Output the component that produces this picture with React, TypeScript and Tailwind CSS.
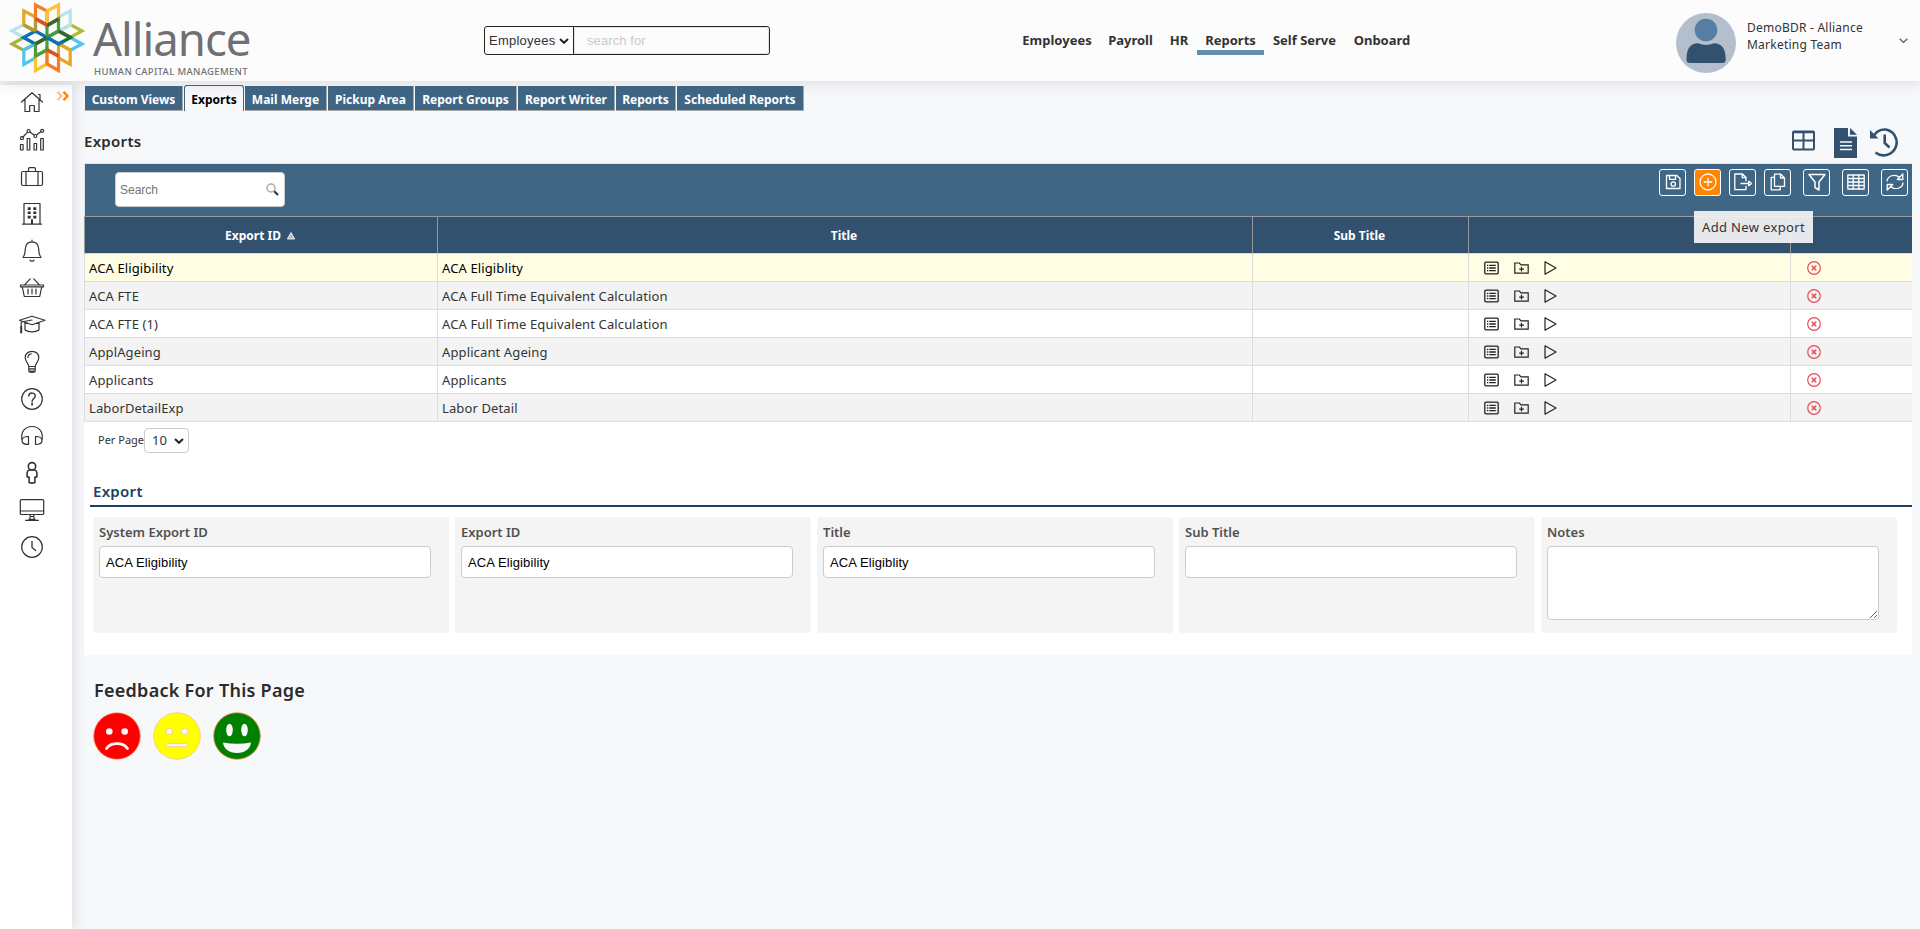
import type { ReactNode } from "react";
import clsx from "clsx";

const tabs = [
	{ name: "Custom Views", width: "w-[98px]" },
	{ name: "Exports", width: "w-[60px]" },
	{ name: "Mail Merge", width: "w-[82px]" },
	{ name: "Pickup Area", width: "w-[86px]" },
	{ name: "Report Groups", width: "w-[102px]" },
	{ name: "Report Writer", width: "w-[97px]" },
	{ name: "Reports", width: "w-[60px]" },
	{ name: "Scheduled Reports", width: "w-[127px]" },
];

const navigation = [
	{ name: "Employees", width: "w-[86px]" },
	{ name: "Payroll", width: "w-[61px]" },
	{ name: "HR", width: "w-[36px]" },
	{ name: "Reports", width: "w-[67px]" },
	{ name: "Self Serve", width: "w-[81px]" },
	{ name: "Onboard", width: "w-[74px]" },
];

const rows = [
	{ id: "ACA Eligibility", title: "ACA Eligiblity" },
	{ id: "ACA FTE", title: "ACA Full Time Equivalent Calculation" },
	{ id: "ACA FTE (1)", title: "ACA Full Time Equivalent Calculation" },
	{ id: "ApplAgeing", title: "Applicant Ageing" },
	{ id: "Applicants", title: "Applicants" },
	{ id: "LaborDetailExp", title: "Labor Detail" },
];

const fields = [
	{ label: "System Export ID", value: "ACA Eligibility" },
	{ label: "Export ID", value: "ACA Eligibility" },
	{ label: "Title", value: "ACA Eligiblity" },
	{ label: "Sub Title", value: "" },
];

const sidebarIcons: { name: string; icon: ReactNode }[] = [
	{
		name: "Home",
		icon: (
			<>
				<path d="M3.5 13 14 3.8 24.5 13M7 10.500V22.500H11.700V16.500H16.300V22.500H21V10.500" />
				<path d="M20.500 5.500H22V10" />
			</>
		),
	},
	{
		name: "Analytics",
		icon: (
			<>
				<path d="M2.500 18.500h2.600v5.500H2.500zM9.200 12.500h2.600V24H9.200zM16 17.500h2.600V24H16zM22.700 12.500h2.600V24h-2.600z" />
				<path d="m5 11 4.300-4.600M12 6l4 3M18.800 8.800l4-3" />
				<circle cx="3.900" cy="12.200" r="1.500" />
				<circle cx="10.600" cy="5" r="1.500" />
				<circle cx="17.300" cy="10" r="1.500" />
				<circle cx="24.200" cy="4.800" r="1.500" />
			</>
		),
	},
	{
		name: "Briefcase",
		icon: (
			<>
				<rect x="3.500" y="8.500" width="21" height="14" rx="1.500" />
				<path d="M8 8.500v14M20 8.500v14M10.500 8.500V6q0-1.300 1.300-1.300h4.400Q17.500 4.700 17.500 6v2.500" />
			</>
		),
	},
	{
		name: "Company",
		icon: (
			<>
				<path d="M6 24V3.500h16V24M4.500 24.200h19M14 19.500v4.500" />
				<path
					d="M9.700 7.300h3v2.600h-3zM15.300 7.300h3v2.600h-3zM9.700 11.500h3v2.600h-3zM15.300 11.500h3v2.600h-3zM9.700 15.800h3v2.600h-3zM15.300 15.800h3v2.600h-3zM13 19.500h2V24h-2z"
					fill="#333"
					stroke="none"
				/>
			</>
		),
	},
	{
		name: "Alerts",
		icon: (
			<>
				<path d="M14 3.200v1.500M5 20.500c2-2.500 2.200-5 2.400-9C7.800 7 10.300 4.800 14 4.800s6.200 2.200 6.600 6.700c.2 4 .4 6.500 2.400 9z" />
				<path d="M12 23c.5 1.600 3.500 1.600 4 0" />
			</>
		),
	},
	{
		name: "Benefits",
		icon: (
			<>
				<path d="M2.500 11h23v1.800h-23zM4.300 13l2 9.500h15.400l2-9.500M6.500 10.800l5.700-6M21.500 10.800l-5.700-6" />
				<path d="M10 15v4.800M14 15v4.800M18 15v4.800" />
			</>
		),
	},
	{
		name: "Learning",
		icon: (
			<>
				<path d="m1.500 9.200 12.500-4 13 4-13 4.500zM7 11.500V19c3.500 2.600 10.500 2.600 14 0v-7.500" />
				<path d="M14 9 3.200 11v5" />
				<path d="M3.200 16v5.500" strokeWidth="2" />
			</>
		),
	},
	{
		name: "Ideas",
		icon: (
			<>
				<path d="M10.800 18.500c-.3-3.600-3.600-4.600-3.600-9 0-3.700 3-6.200 6.800-6.200s6.800 2.500 6.800 6.200c0 4.400-3.300 5.400-3.600 9zM10.800 18.500v4q0 1.900 3.200 1.900t3.200-1.900v-4M10.800 20.800h6.400M11.800 23h4.400" />
				<path d="M10 9.500c0-2 1.200-3.300 3.200-3.600" />
			</>
		),
	},
	{
		name: "Help",
		icon: (
			<>
				<circle cx="14" cy="14" r="10.300" />
				<path d="M10.800 11c.2-4 6.600-3.800 6.500 0 0 2.400-3.200 2.700-3.200 5.500" strokeWidth="1.400" />
				<path d="M14.100 18.300v1.600" strokeWidth="1.600" />
			</>
		),
	},
	{
		name: "Support",
		icon: (
			<>
				<path d="M4 17.500C2.500 10 7 4.500 14 4.500S25.500 10 24 17.500" />
				<path d="M10.500 14.500v8c-4 0-6.500-1-6.500-4s2.500-4 6.500-4zM17.500 14.500v8c4 0 6.500-1 6.500-4s-2.500-4-6.500-4z" />
			</>
		),
	},
	{
		name: "People",
		icon: (
			<>
				<circle cx="14" cy="7.300" r="3.700" strokeWidth="1.600" />
				<path d="M11.300 11h5.400q2.200.8 2.200 3v4h-2v5.500q-2.900 1.200-5.800 0V18h-2v-4q0-2.200 2.200-3z" strokeWidth="1.600" />
			</>
		),
	},
	{
		name: "Devices",
		icon: (
			<>
				<rect x="2.300" y="3.700" width="23.400" height="14.800" rx="1" />
				<path d="M2.300 15h23.400M12.300 18.700l-.5 4.500M15.700 18.700l.5 4.500M7.500 24.300h13M12 20.500h4M11 23.400h6" />
			</>
		),
	},
	{
		name: "Time",
		icon: (
			<>
				<circle cx="14" cy="14" r="10.300" />
				<path d="M14 8.500v6l3.700 3" strokeWidth="1.300" />
			</>
		),
	},
];

const toolbar: { name: string; space: string; icon: ReactNode }[] = [
	{
		name: "Save",
		space: "mr-2",
		icon: (
			<>
				<path d="M2.500 2.500h10.300l3.200 3v10H2.500zM5.500 2.500v3.800h6V2.500" />
				<circle cx="9.300" cy="11" r="2.200" />
			</>
		),
	},
	{
		name: "Add",
		space: "mr-2",
		icon: (
			<>
				<circle cx="9" cy="9" r="8" />
				<path d="M9 4.800v8.400M4.800 9h8.400" />
			</>
		),
	},
	{
		name: "Export",
		space: "mr-2",
		icon: (
			<>
				<path d="M12 13v3.700H.8V1h7.700L12 4.500v3.700M8.300 1v3.700H12M6.500 10.500H15" />
				<path d="m14.700 8.300 3 2.200-3 2.200z" />
			</>
		),
	},
	{
		name: "Copy",
		space: "mr-3",
		icon: (
			<>
				<path d="M5.500 1.200h6.300L15.500 5v8.300H5.500zM11.500 1.200V5h4" />
				<path d="M5.300 4.300H2.200v12.500h9v-3.300" />
			</>
		),
	},
	{ name: "Filter", space: "mr-3", icon: <path d="M1 1.500h16L11 9v8l-4-2.500V9z" strokeWidth="1.500" /> },
	{
		name: "Columns",
		space: "mr-3",
		icon: <path d="M.8 2h16.400v14H.8zM.8 5.500h16.400M.8 9h16.400M.8 12.500h16.400M6.200 2.500v13M11.800 2.500v13" />,
	},
	{
		name: "Refresh",
		space: "",
		icon: <path d="M1 8.500C1.200 2.800 9 .2 13.500 4.500M16.800 1v5.500h-5.500zM17 9.500c-.2 5.700-8 8.300-12.500 4M1.200 17v-5.500h5.500z" />,
	},
];

function Logo() {
	return (
		<svg className="h-[76px] w-[78px]" viewBox="0 0 78 76" fill="none" strokeWidth="3.200" strokeLinejoin="miter">
			<path d="M4 31 15.500 24.700 27 31 15.500 37.200z" stroke="#b5e3f0" />
			<path d="M74 31 62.500 24.700 51 31 62.500 37.200z" stroke="#b0bc36" />
			<path d="M4 44 15.500 37.700 27 44 15.500 50.200z" stroke="#a3b636" />
			<path d="M74 44 62.500 37.700 51 44 62.500 50.200z" stroke="#4fc4ec" />
			<path d="M15.800 10.800 27.500 17V31.500L15.800 25z" stroke="#e3a724" />
			<path d="M62.200 10.800 50.500 17V31.500L62.200 25z" stroke="#b5e3f0" />
			<path d="M15.800 64.300 27.500 58V43.500L15.800 50z" stroke="#4fc4ec" />
			<path d="M62.200 64.300 50.500 58V43.500L62.200 50z" stroke="#e3a724" />
			<path d="M27.500 5 39 11V25.500L27.500 19z" stroke="#f47b28" />
			<path d="M50.500 5 39 11V25.500L50.500 19z" stroke="#fdc22f" />
			<path d="M27.500 70.500 39 64V49.500L27.500 56z" stroke="#fdc22f" />
			<path d="M50.500 70.500 39 64V49.500L50.500 56z" stroke="#f47b28" />
			<path d="M39 37.500 27.500 31 15.500 37.500 27.500 44z" stroke="#0873b5" />
			<path d="M39 37.500 50.500 31 62.500 37.500 50.500 44z" stroke="#17713e" />
			<path d="M39 25.500 50.500 19V31L39 37.500zM39 37.500V50L27.500 56V44z" stroke="#4c9b40" />
			<path d="M39 25.500 50.500 19M27.500 44 39 37.500M50.500 31l12 6.500" stroke="#39652b" />
			<path d="m39 37.500 11.500 6.500 5-2.500" stroke="#0873b5" />
			<path d="M15.800 25 27.500 31M27.500 18.500V31" stroke="#b39a35" />
			<path d="m27.500 18.500 11.500 6.500M39 50l11.500 6" stroke="#d74f23" />
		</svg>
	);
}

function Header() {
	return (
		<header className="relative z-10 flex h-[81px] shrink-0 bg-[#fcfcfc] shadow-[0_2px_14px_rgba(60,70,90,0.15)]">
			<div className="flex w-[484px] pl-[8px]">
				<Logo />
				<div className="pl-[7px] text-[#6f7074]">
					<div className="mt-[15px] h-[52px] text-[45.500px] leading-[46px] tracking-[-1px]">Alliance</div>
					<div className="pl-px text-[9.500px] leading-[10px] font-medium tracking-[0.330px] whitespace-nowrap">
						HUMAN CAPITAL MANAGEMENT
					</div>
				</div>
			</div>
			<div className="mt-[26px] flex h-[29px] w-[286px] rounded-[3px] border border-[#222]">
				<div className="flex w-[89px] items-center border-r border-[#222] pl-1 font-['Liberation_Sans',sans-serif] text-[13px] tracking-[0.25px] text-[#333]">
					<span className="w-[66px]">Employees</span>
					<svg className="ml-[4px] h-[6px] w-[10px]" viewBox="0 0 10 6" fill="none" stroke="#222" strokeWidth="2">
						<path d="m1 1 4 3.800L9 1" />
					</svg>
				</div>
				<div className="flex flex-1 items-center rounded-r-[4px] border border-[#e4e4e4] pl-[12px] font-['Liberation_Sans',sans-serif] text-[13px] tracking-[0.100px] text-[#cacaca]">
					search for
				</div>
			</div>
			<nav className="ml-[244px] flex w-[406px] pt-[30px]" aria-label="Main">
				{navigation.map((item) => (
					<a
						key={item.name}
						className={clsx(
							"h-[25px] shrink-0 text-center text-[13px] leading-[21px] font-bold whitespace-nowrap text-[#333]",
							item.width,
							item.name === "Reports" && "border-b-[5px] border-[#6190b3]",
						)}
					>
						{item.name}
					</a>
				))}
			</nav>
			<div className="ml-auto flex w-[244px]">
				<svg className="mt-[13px] h-[60px] w-[60px]" viewBox="0 0 60 60">
					<circle cx="30" cy="30" r="30" fill="#b4bfcd" />
					<circle cx="30" cy="17" r="11.300" fill="#587da2" />
					<path d="M10.500 46.500c0-10 3-16.300 11.500-16.300q8 3.500 16 0c8.500 0 11.700 6.300 11.700 16.300q0 3.500-3.500 3.500H14q-3.500 0-3.500-3.500z" fill="#31516f" />
				</svg>
				<div className="mt-[19px] ml-[11px] w-[140px] text-[12px] leading-[17px] tracking-[0.230px] text-[#333]">
					DemoBDR - Alliance
					<br />
					Marketing Team
				</div>
				<svg className="mt-[38px] ml-[12px] h-[6px] w-[9px]" viewBox="0 0 9 6" fill="none" stroke="#555" strokeWidth="1.200">
					<path d="m.7.800 3.800 3.700L8.300.800" />
				</svg>
			</div>
		</header>
	);
}

function Sidebar() {
	return (
		<aside className="mt-1 flex w-[72px] shrink-0 bg-white shadow-[2px_0_12px_rgba(60,70,90,0.15)]">
			<ul className="-mt-px flex flex-col pl-[18px]">
				{sidebarIcons.map((item) => (
					<li key={item.name} className="flex h-[37px] items-center" title={item.name}>
						<svg
							className="h-[28px] w-[28px]"
							viewBox="0 0 28 28"
							fill="none"
							stroke="#333"
							strokeWidth="1.200"
							strokeLinecap="round"
							strokeLinejoin="round"
						>
							{item.icon}
						</svg>
					</li>
				))}
			</ul>
			<svg className="mt-[6px] ml-[10px] h-[10px] w-[14px]" viewBox="0 0 14 10" fill="none" strokeWidth="2.400">
				<path d="m1.500.8 4 4.200-4 4.200" stroke="#ffc48b" />
				<path d="m7.500.8 4 4.200-4 4.200" stroke="#ff8400" />
			</svg>
		</aside>
	);
}

function Toolbar() {
	return (
		<div className="flex h-[53px] border-t border-l border-[#dfe3e8] bg-[#406686]">
			<div className="mt-[8px] ml-[30px] flex h-[35px] w-[170px] items-center justify-between rounded-[4px] border border-[#ccc] bg-white pr-[5px] pl-1 font-['Liberation_Sans',sans-serif] text-[12px] text-[#757575]">
				Search
				<svg className="h-[13px] w-[13px]" viewBox="0 0 13 13" fill="none">
					<circle cx="5" cy="5" r="4" stroke="#aaa" strokeWidth="1.500" />
					<path d="m8.200 8.200 3.800 3.800" stroke="#333" strokeWidth="2" />
				</svg>
			</div>
			<div className="mt-[5px] mr-1 ml-auto flex">
				{toolbar.map((item) => (
					<button
						key={item.name}
						type="button"
						aria-label={item.name}
						className={clsx(
							"relative flex h-[27px] w-[27px] items-center justify-center rounded-[3px] border border-white pb-px",
							item.space,
							item.name === "Add" && "bg-[#ff8400]",
						)}
					>
						<svg className="h-[18px] w-[18px]" viewBox="0 0 18 18" fill="none" stroke="#fff" strokeWidth="1.300" strokeLinejoin="round">
							{item.icon}
						</svg>
						{item.name === "Add" && (
							<span className="absolute top-[41px] left-[-1px] z-20 flex h-[32px] w-[119px] items-center justify-center bg-[#f5f5f5]/92 pt-[2px] text-[13px] tracking-[0.350px] whitespace-nowrap text-[#333]">
								Add New export
							</span>
						)}
					</button>
				))}
			</div>
		</div>
	);
}

function RowActions() {
	return (
		<div className="flex items-center pl-[11px]">
			<svg className="h-[14px] w-[15px]" viewBox="0 0 15 14" fill="none" stroke="#222" strokeWidth="1.300">
				<rect x=".8" y="1.200" width="13.400" height="11.600" rx="1" />
				<path d="M5.300 4.300h6.500M5.300 7h6.500M5.300 9.700h6.500M3 4.300h1.300M3 7h1.300M3 9.700h1.300" />
			</svg>
			<svg className="ml-[15px] h-[14px] w-[15px]" viewBox="0 0 15 14" fill="none" stroke="#222" strokeWidth="1.200">
				<path d="M.8 12.200V2h4.600l1.600 1.800h7.200v8.400zM7.500 5.800v4.700M5.200 8.100h4.700" />
			</svg>
			<svg className="ml-[15px] h-[14px] w-[13px]" viewBox="0 0 13 14" fill="none" stroke="#222" strokeWidth="1.200" strokeLinejoin="round">
				<path d="M1 .8v12.400L12 7z" />
			</svg>
		</div>
	);
}

function ExportsTable() {
	return (
		<table className="w-full table-fixed border-separate border-spacing-0 text-[13px] tracking-[0.120px]">
			<colgroup>
				<col className="w-[353px]" />
				<col className="w-[815px]" />
				<col className="w-[216px]" />
				<col className="w-[322px]" />
				<col className="w-[122px]" />
			</colgroup>
			<thead>
				<tr className="h-[38px] bg-[#31516f] text-[12px] tracking-normal text-white [&>th]:border-t [&>th]:border-b [&>th]:border-l [&>th]:border-[#999] [&>th]:border-b-[#ddd] [&>th]:p-0 [&>th]:pt-px [&>th]:pr-[2px]">
					<th>
						<span className="inline-flex items-center gap-[6px]">
							Export ID
							<svg className="h-[8px] w-[8px]" viewBox="0 0 8 8">
								<path d="M4 .5 7.700 7H.3z" fill="#bbb" stroke="#fff" strokeWidth=".8" />
							</svg>
						</span>
					</th>
					<th>Title</th>
					<th>Sub Title</th>
					<th />
					<th />
				</tr>
			</thead>
			<tbody>
				{rows.map((row, index) => (
					<tr
						key={row.id}
						className={clsx(
							"h-[28px] [&>td]:border-b [&>td]:border-l [&>td]:border-[#ddd] [&>td]:py-0 [&>td]:pr-0 [&>td]:pl-1",
							index === 0 ? "bg-[#fffde3] text-black" : index % 2 ? "bg-[#f3f3f3] text-[#333]" : "bg-white text-[#333]",
						)}
					>
						<td>
							<div className="pt-[2px]">{row.id}</div>
						</td>
						<td>
							<div className="pt-[2px]">{row.title}</div>
						</td>
						<td />
						<td>
							<RowActions />
						</td>
						<td>
							<svg className="ml-[12px] h-[14px] w-[14px]" viewBox="0 0 14 14" fill="none" stroke="#ea4a53">
								<circle cx="7" cy="7" r="6.300" strokeWidth="1.200" />
								<path d="m4.800 4.800 4.400 4.400M9.200 4.800 4.800 9.200" strokeWidth="1.600" />
							</svg>
						</td>
					</tr>
				))}
			</tbody>
		</table>
	);
}

function ExportForm() {
	return (
		<section className="pt-[23px] pl-[6px]">
			<h2 className="h-[25px] border-b-2 border-[#1a3f61] pl-[3px] text-[15px] leading-[18px] font-semibold tracking-[0.300px] text-[#1a3f61]">
				Export
			</h2>
			<div className="mt-[10px] flex gap-[6px] pl-[3px]">
				{fields.map((field) => (
					<div key={field.label} className="h-[116px] w-[356px] rounded-[3px] bg-[#f4f4f4] pt-[6px] pl-[6px]">
						<div className="h-[23px] text-[13px] leading-[19px] font-semibold text-[#505050]">{field.label}</div>
						<div className="flex h-[32px] w-[332px] items-center rounded-[4px] border border-[#ccc] bg-white px-[6px] pt-px font-['Liberation_Sans',sans-serif] text-[13px] tracking-[0.100px] text-black">
							{field.value}
						</div>
					</div>
				))}
				<div className="h-[116px] w-[356px] rounded-[3px] bg-[#f4f4f4] pt-[6px] pl-[6px]">
					<div className="h-[23px] text-[13px] leading-[19px] font-semibold text-[#505050]">Notes</div>
					<textarea className="block h-[74px] w-[332px] rounded-[4px] border border-[#ccc] bg-white" />
				</div>
			</div>
		</section>
	);
}

function Feedback() {
	return (
		<section className="pt-[22px] pl-[9px]">
			<h2 className="pl-px text-[18px] leading-[26px] font-semibold tracking-[0.270px] text-[#2b2b2b]">Feedback For This Page</h2>
			<div className="mt-[9px] flex gap-[12px]">
				<svg className="h-[48px] w-[48px]" viewBox="0 0 48 48">
					<circle cx="24" cy="24" r="23.300" fill="#f00" stroke="#f59a6b" strokeWidth=".7" />
					<circle cx="16.300" cy="19.500" r="3.300" fill="#f7f8fa" />
					<circle cx="31.700" cy="19.500" r="3.300" fill="#f7f8fa" />
					<path d="M13.500 36.500c4.500-6.500 16.500-6.500 21 0" fill="none" stroke="#f7f8fa" strokeWidth="2.800" strokeLinecap="round" />
				</svg>
				<svg className="h-[48px] w-[48px]" viewBox="0 0 48 48" fill="#f7f8fa" stroke="#f5c08a" strokeWidth=".7">
					<circle cx="24" cy="24" r="23.300" fill="#ff0" />
					<circle cx="16.300" cy="19.500" r="3.200" />
					<circle cx="31.700" cy="19.500" r="3.200" />
					<rect x="13.200" y="31.700" width="21.600" height="3" rx="1" />
				</svg>
				<svg className="h-[48px] w-[48px]" viewBox="0 0 48 48" fill="#f7f8fa">
					<circle cx="24" cy="24" r="23.300" fill="#008000" stroke="#e88a3a" strokeWidth=".8" />
					<ellipse cx="16.500" cy="18" rx="3.300" ry="6.300" />
					<ellipse cx="31.500" cy="18" rx="3.300" ry="6.300" />
					<path d="M10 30.500q14 2.500 28 0c-.5 6-6 10.500-14 10.500s-13.500-4.500-14-10.500z" />
				</svg>
			</div>
		</section>
	);
}

export default function App() {
	return (
		<div className="flex h-[929px] w-[1920px] flex-col overflow-hidden bg-[#f7f8fa] font-['Noto_Sans',sans-serif]">
			<Header />
			<div className="flex min-h-0 flex-1">
				<Sidebar />
				<main className="min-w-0 flex-1 pt-1 pr-2 pl-[12px]">
					<div className="flex h-[26px] pl-px">
						{tabs.map((tab) => (
							<button
								key={tab.name}
								type="button"
								className={clsx(
									"mr-px shrink-0 text-center text-[12px] leading-[25px] font-bold whitespace-nowrap",
									tab.width,
									tab.name === "Exports"
										? "rounded-t-[3px] border-x border-t border-[#406686] bg-[#f7f8fa] pt-px text-black"
										: "mt-px border-r border-b border-[#a9a9a9] bg-[#406686] pt-px text-white",
								)}
							>
								{tab.name}
							</button>
						))}
					</div>
					<div className="flex h-[52px]">
						<h1 className="pt-[20px] text-[15px] leading-[20px] font-semibold tracking-[0.300px] text-[#2b2b2b]">Exports</h1>
						<div className="mr-[12px] ml-auto flex items-start">
							<svg className="mt-[19px] h-[22px] w-[23px]" viewBox="0 0 23 22" fill="none" stroke="#31516f" strokeWidth="2">
								<rect x="1" y="1.500" width="21" height="18" rx="1" />
								<path d="M1 10.500h21M11.500 2v17.500M1 2.200h21" />
							</svg>
							<svg className="mt-[17px] ml-[19px] h-[30px] w-[23px]" viewBox="0 0 23 30" fill="#31516f">
								<path d="M0 0h14v8.500h9V30H0zM16 0l7 6.800h-7z" />
								<path d="M6 14h12M6 17.700h12M6 21.400h12" stroke="#f7f8fa" strokeWidth="1.500" />
							</svg>
							<svg className="mt-[17px] ml-[13px] h-[30px] w-[30px]" viewBox="0 0 30 30" fill="none" stroke="#31516f" strokeWidth="2.600">
								<path d="M3.500 8C7 2.500 12 1.300 15.500 1.500a13 13 0 1 1-10 23" />
								<path d="M0 2v8.500h8.500z" fill="#31516f" stroke="none" />
								<path d="M14.700 6.500V15l4.800 4.500" />
							</svg>
						</div>
					</div>
					<div className="h-[492px] bg-white">
						<Toolbar />
						<ExportsTable />
						<div className="flex h-[37px] items-center pt-[6px] pb-[6px] pl-[14px] text-[11px] text-[#333]">
							<span className="w-[46px] whitespace-nowrap">Per Page</span>
							<div className="flex h-[25px] w-[45px] items-center rounded-[4px] border border-[#ccc] pl-[7px] text-[13px]">
								<span className="w-[22px]">10</span>
								<svg className="h-[6px] w-[10px]" viewBox="0 0 10 6" fill="none" stroke="#222" strokeWidth="2">
									<path d="m1 1 4 3.800L9 1" />
								</svg>
							</div>
						</div>
						<ExportForm />
					</div>
					<Feedback />
				</main>
			</div>
		</div>
	);
}
